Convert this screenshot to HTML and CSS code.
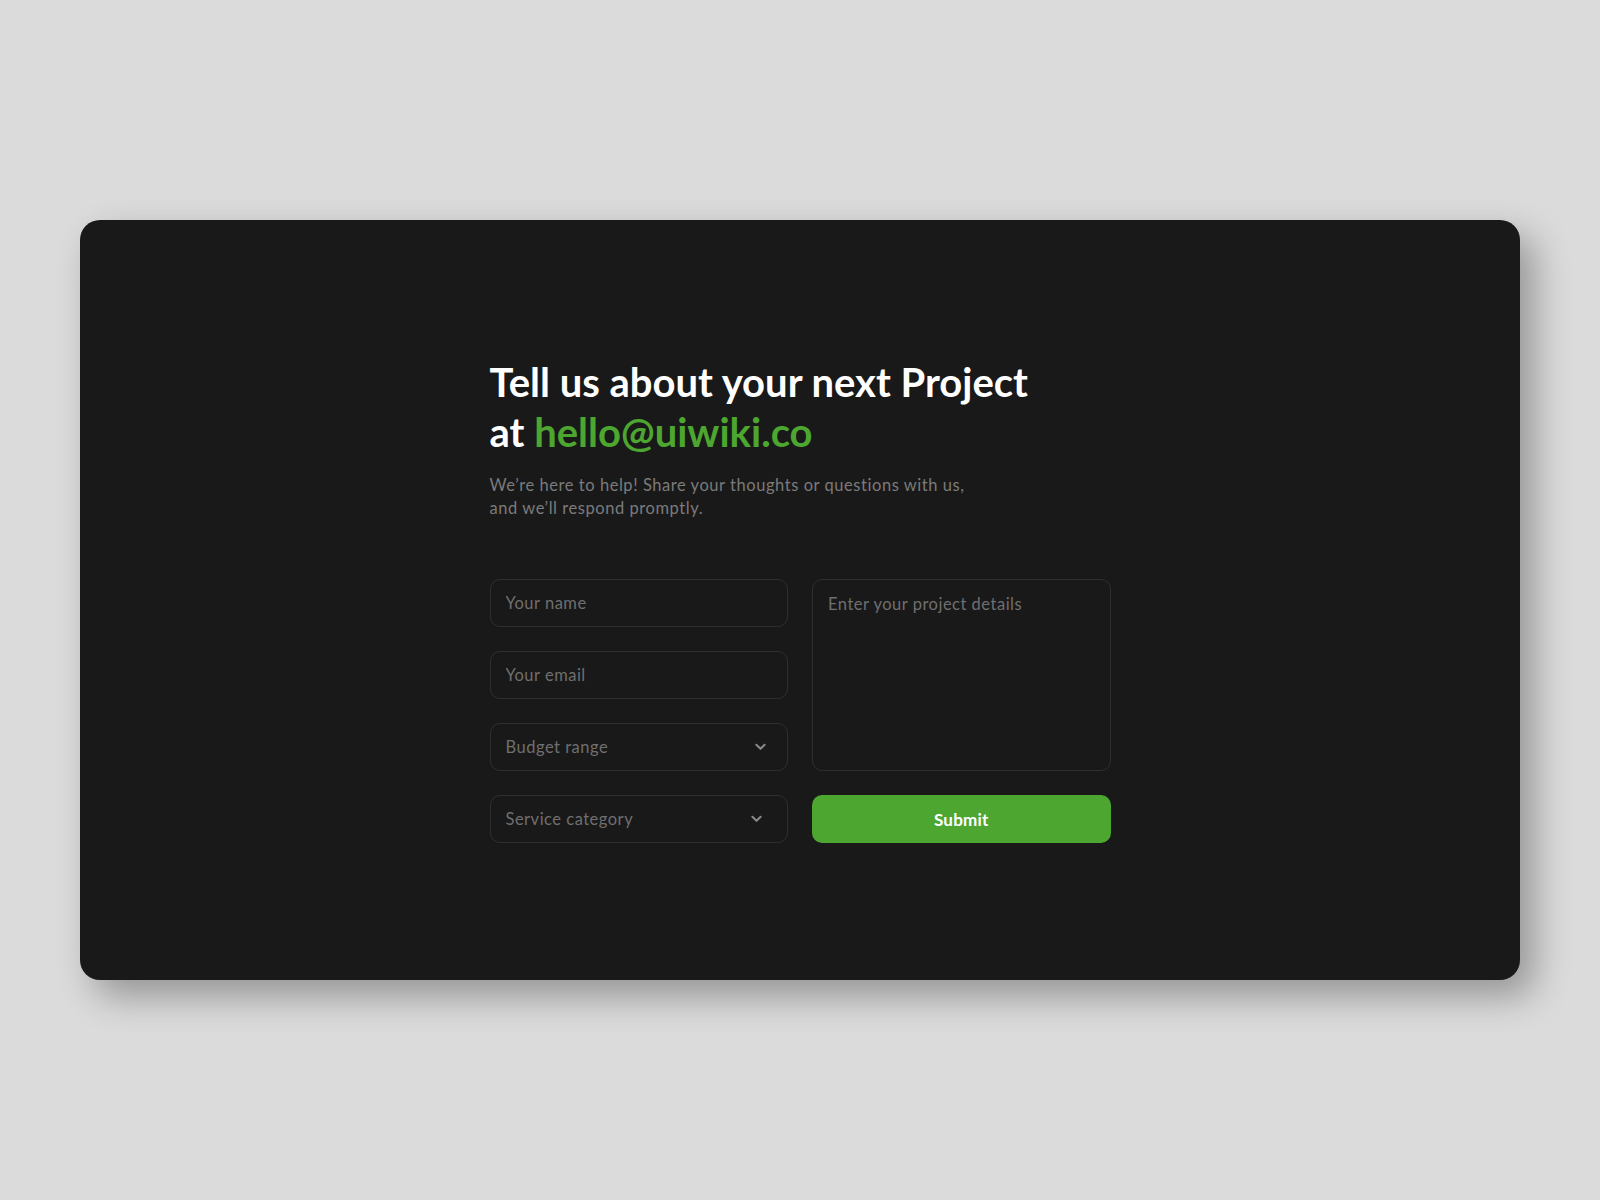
FILE: index.html
```html
<!DOCTYPE html>
<html lang="en">
<head>
  <meta charset="UTF-8" />
  <meta name="viewport" content="width=device-width, initial-scale=1" />
  <title>Contact</title>
  <link rel="stylesheet" href="styles.css">
</head>
<body>

  <div class="card">
    <div class="contact">
      <h1>Tell us about your next Project<br>at <span class="mail">hello@uiwiki.co</span></h1>
      <p class="lead">We’re here to help! Share your thoughts or questions with us, and we’ll respond promptly.</p>

      <form class="form" onsubmit="return false">
        <div class="col">
          <input type="text" class="field" placeholder="Your name" />
          <input type="email" class="field" placeholder="Your email" />
          <div class="select">
            <select class="field" required>
              <option value="" disabled selected hidden>Budget range</option>
              <option>Under $5k</option>
              <option>$5k – $15k</option>
              <option>$15k+</option>
            </select>
            <svg class="chev" viewBox="0 0 12 8"><path d="M1.5 1.5 6 6l4.5-4.5" /></svg>
          </div>
          <div class="select">
            <select class="field" required>
              <option value="" disabled selected hidden>Service category</option>
              <option>Branding</option>
              <option>Web design</option>
              <option>Development</option>
            </select>
            <svg class="chev chev-alt" viewBox="0 0 12 8"><path d="M1.5 1.5 6 6l4.5-4.5" /></svg>
          </div>
        </div>
        <div class="col">
          <textarea class="field area" placeholder="Enter your project details"></textarea>
          <button type="submit">Submit</button>
        </div>
      </form>
    </div>
  </div>

</body>
</html>
```

FILE: styles.css
```css
body {
  margin: 0;
  background: #dbdbdb;
  font-family: Lato, "Open Sans", sans-serif;
  min-height: 100vh;
  padding: 220px 80px;
  box-sizing: border-box;
}
.card {
  height: 760px;
  background: #191919;
  border-radius: 20px;
  box-shadow: 14px 16px 36px rgba(0, 0, 0, 0.32);
  display: flex;
  justify-content: center;
  align-items: center;
}
.contact {
  width: 621px;
}
h1 {
  margin: 0;
  font-size: 40px;
  line-height: 50px;
  font-weight: 700;
  color: #ffffff;
}
.mail {
  color: #4ca62f;
}
.lead {
  margin: 17px 0 0;
  max-width: 490px;
  font-size: 16.5px;
  line-height: 23px;
  letter-spacing: 0.55px;
  color: #7b7b7b;
}
.form {
  margin-top: 59px;
  display: flex;
  gap: 24px;
}
.col {
  flex: 1;
  display: flex;
  flex-direction: column;
  gap: 24px;
}
.field {
  display: block;
  width: 100%;
  height: 48px;
  box-sizing: border-box;
  padding: 0 15px;
  background: #191919;
  border: 1px solid #2f2f2f;
  border-radius: 10px;
  font-family: inherit;
  font-size: 16.5px;
  letter-spacing: 0.5px;
  color: #d0d0d0;
  outline: none;
}
.field::placeholder {
  color: #6f6f6f;
}
select.field {
  appearance: none;
  color: #6f6f6f;
}
.select {
  position: relative;
}
.chev {
  position: absolute;
  right: 22px;
  top: 20px;
  width: 11px;
  height: 8px;
  fill: none;
  stroke: #8a8a8a;
  stroke-width: 2.2;
  stroke-linecap: round;
  stroke-linejoin: round;
}
.chev-alt {
  right: 26px;
}
.area {
  height: 192px;
  padding: 13px 15px;
  resize: none;
  line-height: 22px;
}
button {
  height: 48px;
  border: none;
  border-radius: 10px;
  background: #4ca62f;
  color: #ffffff;
  font-family: inherit;
  font-size: 17px;
  font-weight: 700;
  letter-spacing: 0.2px;
  cursor: pointer;
}
```
